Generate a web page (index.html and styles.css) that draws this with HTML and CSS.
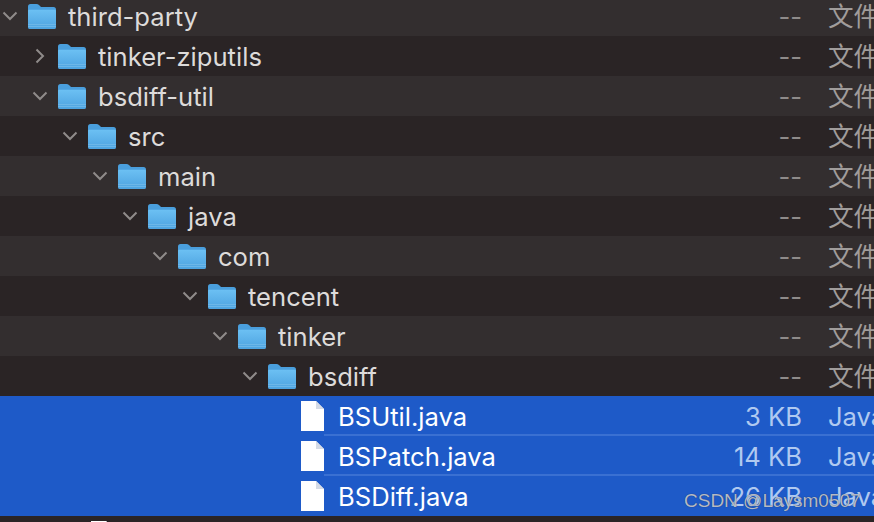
FILE: index.html
```html
<!DOCTYPE html>
<html lang="zh">
<head>
  <meta charset="UTF-8" />
  <title>third-party</title>
  <link rel="stylesheet" href="styles.css">
</head>
<body>

<svg class="defs" width="0" height="0">
  <defs>
    <linearGradient id="folderBody" x1="0" y1="0" x2="0" y2="1">
      <stop offset="0" stop-color="#6cc0f3" />
      <stop offset="1" stop-color="#4da3e0" />
    </linearGradient>
    <symbol id="folder" viewBox="0 0 28 26">
      <path d="M0 3.500Q0 1 2.500 1H8.500Q10 1 11 2L13 4H25.500Q28 4 28 6.500V23.500Q28 26 25.500 26H2.500Q0 26 0 23.500Z" fill="#4a9fdd" />
      <path d="M0 8Q0 6.800 1.200 6.800H26.800Q28 6.800 28 8V24Q28 26 26 26H2Q0 26 0 24Z" fill="url(#folderBody)" />
      <path d="M0 21.500H28M0 23.500H28" stroke="#78bdea" stroke-width=".7" />
    </symbol>
    <symbol id="file" viewBox="0 0 23 30">
      <path d="M0 0H15L23 8V30H0Z" fill="#fff" />
      <path d="M15 0L23 8H15Z" fill="#d5dbe6" />
    </symbol>
    <symbol id="down" viewBox="0 0 16 10">
      <path d="M1.500 1.500L8 8L14.500 1.500" fill="none" stroke="#8f8b8a" stroke-width="2" />
    </symbol>
    <symbol id="right" viewBox="0 0 10 16">
      <path d="M1.500 1.500L8 8L1.500 14.500" fill="none" stroke="#8f8b8a" stroke-width="2" />
    </symbol>
  </defs>
</svg>

<div class="listing">
  <div class="row level-0">
    <svg class="arrow"><use href="#down" /></svg>
    <svg class="icon"><use href="#folder" /></svg>
    <span class="name">third-party</span><span class="size">--</span><span class="kind">文件夹</span>
  </div>
  <div class="row alt level-1">
    <svg class="arrow side"><use href="#right" /></svg>
    <svg class="icon"><use href="#folder" /></svg>
    <span class="name">tinker-ziputils</span><span class="size">--</span><span class="kind">文件夹</span>
  </div>
  <div class="row level-1">
    <svg class="arrow"><use href="#down" /></svg>
    <svg class="icon"><use href="#folder" /></svg>
    <span class="name">bsdiff-util</span><span class="size">--</span><span class="kind">文件夹</span>
  </div>
  <div class="row alt level-2">
    <svg class="arrow"><use href="#down" /></svg>
    <svg class="icon"><use href="#folder" /></svg>
    <span class="name">src</span><span class="size">--</span><span class="kind">文件夹</span>
  </div>
  <div class="row level-3">
    <svg class="arrow"><use href="#down" /></svg>
    <svg class="icon"><use href="#folder" /></svg>
    <span class="name">main</span><span class="size">--</span><span class="kind">文件夹</span>
  </div>
  <div class="row alt level-4">
    <svg class="arrow"><use href="#down" /></svg>
    <svg class="icon"><use href="#folder" /></svg>
    <span class="name">java</span><span class="size">--</span><span class="kind">文件夹</span>
  </div>
  <div class="row level-5">
    <svg class="arrow"><use href="#down" /></svg>
    <svg class="icon"><use href="#folder" /></svg>
    <span class="name">com</span><span class="size">--</span><span class="kind">文件夹</span>
  </div>
  <div class="row alt level-6">
    <svg class="arrow"><use href="#down" /></svg>
    <svg class="icon"><use href="#folder" /></svg>
    <span class="name">tencent</span><span class="size">--</span><span class="kind">文件夹</span>
  </div>
  <div class="row level-7">
    <svg class="arrow"><use href="#down" /></svg>
    <svg class="icon"><use href="#folder" /></svg>
    <span class="name">tinker</span><span class="size">--</span><span class="kind">文件夹</span>
  </div>
  <div class="row alt level-8">
    <svg class="arrow"><use href="#down" /></svg>
    <svg class="icon"><use href="#folder" /></svg>
    <span class="name">bsdiff</span><span class="size">--</span><span class="kind">文件夹</span>
  </div>
  <div class="row selected level-9">
    <span class="arrow"></span>
    <svg class="icon doc"><use href="#file" /></svg>
    <span class="name">BSUtil.java</span><span class="size">3 KB</span><span class="kind">Java</span>
  </div>
  <div class="row selected level-9">
    <span class="arrow"></span>
    <svg class="icon doc"><use href="#file" /></svg>
    <span class="name">BSPatch.java</span><span class="size">14 KB</span><span class="kind">Java</span>
  </div>
  <div class="row selected last level-9">
    <span class="arrow"></span>
    <svg class="icon doc"><use href="#file" /></svg>
    <span class="name">BSDiff.java</span><span class="size">26 KB</span><span class="kind">Java</span>
  </div>
  <div class="row alt level-2">
    <span class="arrow"></span>
    <svg class="icon doc"><use href="#file" /></svg>
  </div>
</div>

<div class="watermark">CSDN @Laysm0507</div>

</body>
</html>
```

FILE: styles.css
```css
html, body {
  height: 100%;
}

body {
  margin: 0;
  overflow: hidden;
  position: relative;
  background-color: #2a2425;
  font-family: Inter, 'Liberation Sans', 'Noto Sans CJK SC', sans-serif;
  font-size: 25.600px;
  color: #dddbda;
}

.defs {
  display: block;
}

.listing {
  height: 526px;
  margin-top: -4px;
  overflow: hidden;
}

.row {
  display: flex;
  align-items: center;
  height: 40px;
  background-color: #332e2f;
  white-space: nowrap;
}

.row.alt {
  background-color: #2a2425;
}

.level-0 { padding-left: 2px; }
.level-1 { padding-left: 32px; }
.level-2 { padding-left: 62px; }
.level-3 { padding-left: 92px; }
.level-4 { padding-left: 122px; }
.level-5 { padding-left: 152px; }
.level-6 { padding-left: 182px; }
.level-7 { padding-left: 212px; }
.level-8 { padding-left: 242px; }
.level-9 { padding-left: 272px; }

.arrow {
  width: 16px;
  height: 10px;
  margin-right: 10px;
  flex: none;
}

.arrow.side {
  height: 16px;
}

.icon {
  width: 28px;
  height: 26px;
  margin-right: 12px;
  flex: none;
}

.icon.doc {
  width: 23px;
  height: 30px;
  margin-left: 3px;
  margin-right: 14px;
}

.name {
  flex: 1;
}

.size {
  width: 140px;
  margin-right: 26px;
  flex: none;
  text-align: right;
  color: #8f8b8a;
}

.kind {
  width: 46px;
  flex: none;
  overflow: hidden;
  padding-bottom: 3px;
  color: #a09c9b;
}

.row.selected {
  background: linear-gradient(#3a70d2, #3a70d2) 324px 100% / 100% 2px no-repeat #1e5ac8;
  color: #fff;
}

.row.selected.last {
  background: #1e5ac8;
}

.row.selected .size,
.row.selected .kind {
  color: #b0c9f0;
}

.row.selected .kind {
  padding-bottom: 0;
}

.watermark {
  position: absolute;
  left: 684px;
  top: 490px;
  font-family: 'Liberation Sans', sans-serif;
  font-size: 19px;
  color: #b4bac6;
  text-shadow: 0 0 1px rgba(0, 0, 0, 0.5);
}
```
